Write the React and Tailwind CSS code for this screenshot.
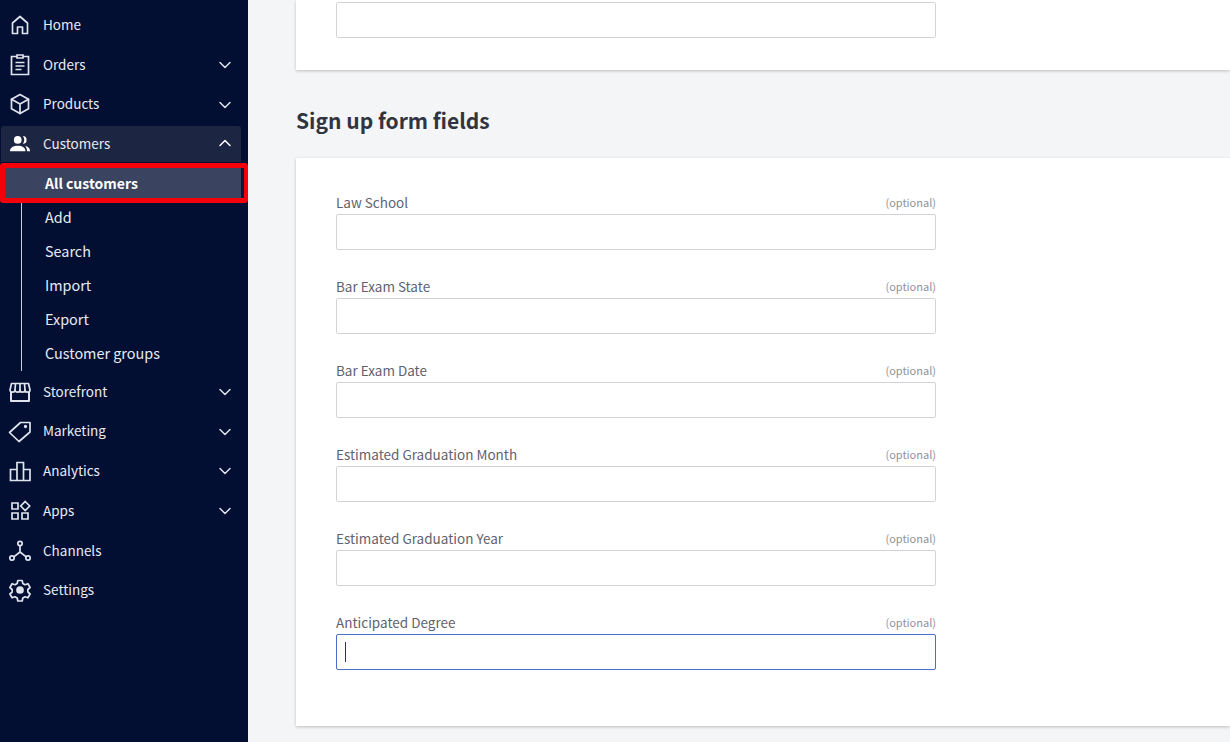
import React from 'react';
import { ChevronDown, ChevronUp } from 'lucide-react';

const ICON_PROPS = {
    width: 24,
    height: 24,
    viewBox: '0 0 24 24',
    fill: 'none',
    stroke: 'currentColor',
    strokeWidth: 1.7,
    strokeLinejoin: 'round',
    strokeLinecap: 'round',
};

const HomeIcon = () => (
    <svg {...ICON_PROPS}>
        <path d="M4.500 20.500V10L12 3.500l7.500 6.500v10.500h-5V14h-5v6.500z" />
    </svg>
);

const OrdersIcon = () => (
    <svg {...ICON_PROPS} strokeLinecap="butt" strokeLinejoin="miter">
        <path d="M9 5H3.500v18h17V5H15M9 3.500h6v3H9z" transform="translate(0 -1.500)" />
        <path d="M7.500 9.500h9M7.500 13h9M7.500 16.500h6" />
    </svg>
);

const ProductsIcon = () => (
    <svg {...ICON_PROPS}>
        <path d="M12 2.500l8.500 4.700v9.600L12 21.500l-8.500-4.700V7.200z" />
        <path d="M3.500 7.200L12 12l8.500-4.800M12 12v9.500" />
    </svg>
);

const CustomersIcon = () => (
    <svg width="22" height="22" viewBox="0 0 24 24" fill="currentColor">
        <circle cx="9.500" cy="7.500" r="4.200" />
        <path d="M1 20c0-4 4-6 8.500-6s8.500 2 8.500 6z" />
        <path d="M15 3.300a4.200 4.200 0 0 1 0 8.400c1-1.100 1.600-2.600 1.600-4.200S16 4.400 15 3.300z" />
        <path d="M17.500 14.200c3 .5 5.500 2.300 5.500 5.800h-3.300c0-2.300-.8-4.400-2.200-5.800z" />
    </svg>
);

const StorefrontIcon = () => (
    <svg {...ICON_PROPS} strokeLinecap="butt">
        <path d="M3.500 3.500h17l1.500 6.500c0 1.400-1.200 2.200-2.500 2.200s-2.500-.8-2.500-2.200c0 1.400-1.200 2.200-2.500 2.200S12 11.400 12 10c0 1.400-1.200 2.200-2.500 2.200S7 11.400 7 10c0 1.400-1.200 2.200-2.500 2.200S2 11.400 2 10z" />
        <path d="M7.500 3.500L7 10M12 3.500V10M16.500 3.500L17 10" />
        <path d="M3 12v9h18v-9" strokeWidth="2" />
    </svg>
);

const MarketingIcon = () => (
    <svg {...ICON_PROPS}>
        <path d="M1.500 13.500L12.500 3.500h9.500v9.500L11 22.500z" />
        <circle cx="17.500" cy="7.500" r="0.800" fill="currentColor" />
    </svg>
);

const AnalyticsIcon = () => (
    <svg {...ICON_PROPS} strokeLinejoin="miter" strokeLinecap="butt">
        <path d="M2.500 21.500v-11h6.500v11zM9 21.500V3.500h6.500v18zM15.500 21.500v-11h6.500v11z" />
    </svg>
);

const AppsIcon = () => (
    <svg {...ICON_PROPS} strokeLinejoin="miter">
        <path d="M4 4h6v6H4zM4 14h6v6H4zM14 14h6v6h-6zM17.200 2.500l4.500 4.500-4.500 4.500-4.500-4.500z" />
    </svg>
);

const ChannelsIcon = () => (
    <svg {...ICON_PROPS}>
        <circle cx="12" cy="4.500" r="2.200" />
        <circle cx="4" cy="19" r="2.200" />
        <circle cx="20" cy="19" r="2.200" />
        <path d="M12 6.700V13l-6.200 4.800M12 13l6.200 4.800" />
    </svg>
);

const SettingsIcon = () => (
    <svg {...ICON_PROPS}>
        <path d="M9.800 2.500h4.400l.6 3 2.200 1.200 2.900-1 2.200 3.800-2.300 2 .1 2.500 2.200 2-2.200 3.800-2.900-1-2.200 1.200-.6 3H9.800l-.6-3L7 18.800l-2.900 1-2.200-3.800 2.300-2-.1-2.500-2.200-2 2.200-3.800 2.900 1 2.200-1.200z" />
        <circle cx="12" cy="12" r="3" fill="currentColor" />
    </svg>
);

const FIELDS = [
    'Law School',
    'Bar Exam State',
    'Bar Exam Date',
    'Estimated Graduation Month',
    'Estimated Graduation Year',
];

const SUB_ITEMS = ['Add', 'Search', 'Import', 'Export', 'Customer groups'];

function NavRow({ icon, label, chevron, chevronClass = '', height = 'h-[40px]' }) {
    return (
        <div className={`flex ${height} items-center pl-[8px] pr-[13px] text-[#e8ebf3]`}>
            <span className="flex w-[24px] justify-center text-[#dfe3ec]">{icon}</span>
            <span className="ml-[11px] flex-1 pb-[2px] text-[13.5px] leading-[20px]">{label}</span>
            {chevron && <ChevronDown size={20} strokeWidth={1.8} className={`text-[#dfe3ec] ${chevronClass}`} />}
        </div>
    );
}

function Sidebar() {
    return (
        <aside className="flex h-full w-[248px] shrink-0 flex-col bg-[#020f33] pt-[5px]">
            <NavRow icon={<HomeIcon />} label="Home" />
            <NavRow icon={<OrdersIcon />} label="Orders" chevron />
            <NavRow icon={<ProductsIcon />} label="Products" chevron chevronClass="translate-y-px" height="h-[38px]" />

            <div className="relative">
                {/* Expanded section header */}
                <div className="ml-[1px] mr-[7px] mt-[3px] flex h-[36px] items-center rounded-t-[3px] bg-[#1c2542] pl-[7px] pr-[6px] text-[#e8ebf3]">
                    <span className="flex w-[24px] justify-center text-white"><CustomersIcon /></span>
                    <span className="ml-[11px] flex-1 pb-[2px] text-[13.5px] leading-[20px]">Customers</span>
                    <ChevronUp size={20} strokeWidth={1.8} className="-translate-y-[1px] text-white" />
                </div>

                <div className="relative mt-[3px]">
                    <div className="absolute bottom-[-1px] left-[21px] top-0 w-px bg-[#c9cede]" />

                    <div className="relative mx-[1px] mr-[7px] flex h-[36px] items-center bg-[#3a4360] pl-[44px] text-[14px] font-semibold leading-[20px] text-white">
                        All customers
                        {/* Dark sliver between the row and the red box */}
                        <div className="absolute bottom-[1px] right-[-3px] top-[1px] w-[3px] bg-[#10183a]" />
                        {/* Red highlight drawn over the screenshot */}
                        <div className="absolute bottom-[-2px] left-[-1px] right-[-7px] top-[-2px] rounded-[3px] border-[5px] border-r-[4px] border-[#f5000a]" />
                    </div>

                    <div className="-mt-[1px]">
                        {SUB_ITEMS.map(item => (
                            <div key={item} className="flex h-[34px] items-center pl-[45px] text-[14.4px] leading-[20px] text-[#e8ebf3]">
                                {item}
                            </div>
                        ))}
                    </div>
                </div>
            </div>

            <div className="mt-[2px]">
                <NavRow icon={<StorefrontIcon />} label="Storefront" chevron height="h-[39px]" />
                <NavRow icon={<MarketingIcon />} label="Marketing" chevron chevronClass="translate-y-px" height="h-[40px]" />
                <NavRow icon={<AnalyticsIcon />} label="Analytics" chevron />
                <NavRow icon={<AppsIcon />} label="Apps" chevron />
                <NavRow icon={<ChannelsIcon />} label="Channels" height="h-[39px]" />
                <NavRow icon={<SettingsIcon />} label="Settings" height="h-[39px]" />
            </div>
        </aside>
    );
}

function FieldHeader({ label }) {
    return (
        <div className="flex h-[20px] justify-between">
            <span className="text-[13.5px] leading-[18px] text-[#5f6270]">{label}</span>
            <span className="text-[11px] leading-[18px] text-[#8f929e]">(optional)</span>
        </div>
    );
}

function Field({ label }) {
    return (
        <div className="h-[84px] w-[600px]">
            <FieldHeader label={label} />
            <div className="mt-[1px] h-[36px] rounded-[2px] border border-[#d1d3d8] bg-white" />
        </div>
    );
}

export default function App() {
    return (
        <div className="flex h-[742px] w-[1230px] overflow-hidden bg-[#f4f5f7] font-['Noto_Sans_CJK_SC','Noto_Sans',sans-serif]">
            <Sidebar />

            <main className="min-w-0 flex-1 pl-[48px]">
                <section className="h-[70px] bg-white pl-[40px] pt-[2px] shadow-[0_1px_3px_rgba(49,52,64,0.28)]">
                    <div className="h-[36px] w-[600px] rounded-[2px] border border-[#d1d3d8] bg-white" />
                </section>

                <h2 className="mt-[33px] h-[35px] text-[21px] font-semibold leading-[34px] text-[#313440]">
                    Sign up form fields
                </h2>

                <section className="mt-[20px] h-[568px] bg-white pl-[40px] pt-[35px] shadow-[0_1px_3px_rgba(49,52,64,0.28)]">
                    {FIELDS.map(label => (
                        <Field key={label} label={label} />
                    ))}

                    <div className="w-[600px]">
                        <FieldHeader label="Anticipated Degree" />
                        <div className="mt-[1px] flex h-[36px] items-center rounded-[2px] border border-[#4a6fc4] bg-white pl-[8px]">
                            <div className="h-[20px] w-px bg-[#313440]" />
                        </div>
                    </div>
                </section>
            </main>
        </div>
    );
}
